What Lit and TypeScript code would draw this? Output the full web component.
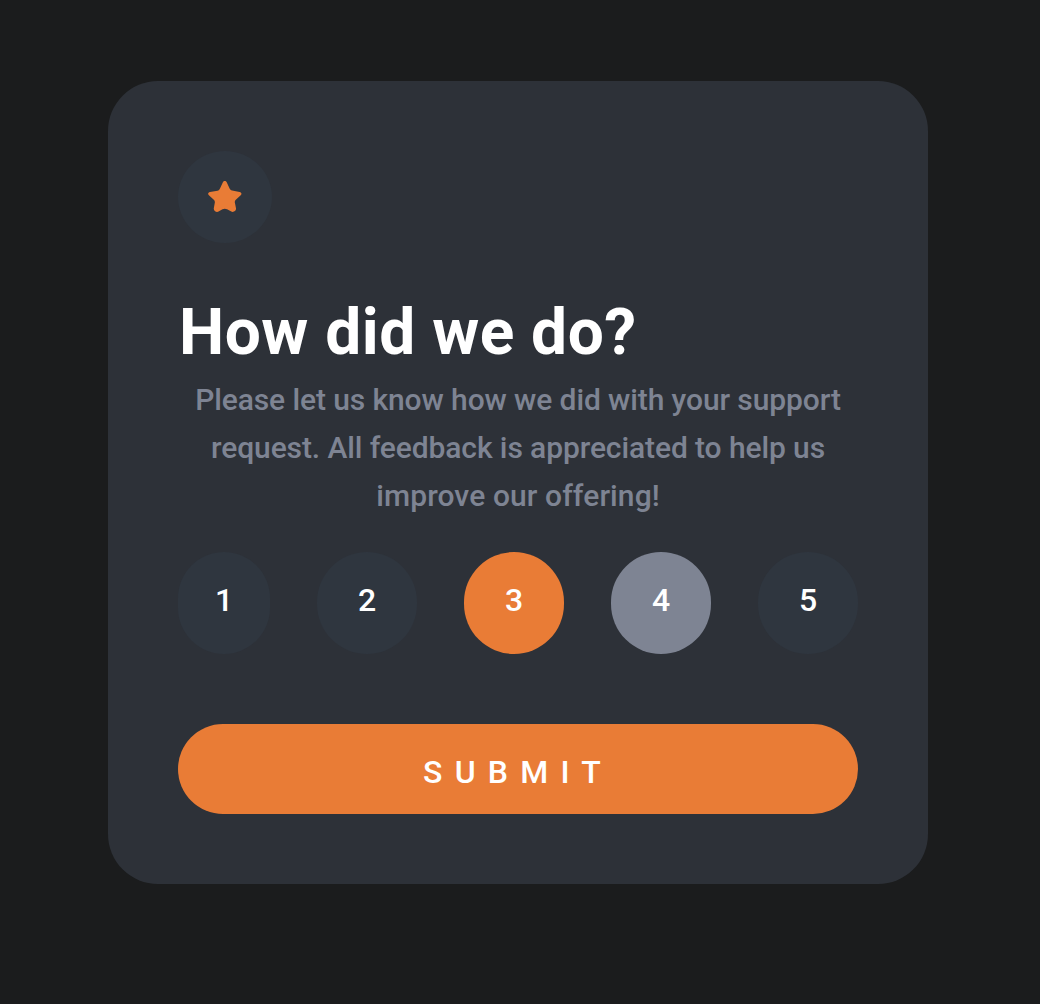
import { LitElement, html, css } from "lit";
import { customElement, state } from "lit/decorators.js";
import { classMap } from "lit/directives/class-map.js";

@customElement("app-root")
export class AppRoot extends LitElement {
  static styles = css`
    :host {
      display: block;
      box-sizing: border-box;
      height: 1004px;
      padding: 81px 112px 120px 108px;
      background: #1b1c1d;
      font-family: Roboto, "Liberation Sans", sans-serif;
    }
    .card {
      box-sizing: border-box;
      width: 820px;
      height: 803px;
      padding: 70px;
      border-radius: 50px;
      background: #2d3138;
      display: flex;
      flex-direction: column;
      align-items: flex-start;
    }
    .badge {
      box-sizing: border-box;
      width: 94px;
      height: 92px;
      padding: 30px;
      border-radius: 50%;
      background: #2f363f;
    }
    .star {
      display: block;
      width: 34px;
      height: 32px;
    }
    .title {
      margin: 50px 0 0;
      padding: 2px 0 0 1px;
      font-size: 64px;
      line-height: 76px;
      font-weight: 700;
      letter-spacing: 0.5px;
      color: #fff;
      white-space: nowrap;
    }
    .text {
      margin: 5px 0 0;
      width: 680px;
      height: 144px;
      font-size: 30px;
      line-height: 48px;
      font-weight: 500;
      letter-spacing: -0.1px;
      text-align: center;
      color: #7e8493;
    }
    .line {
      display: block;
      white-space: nowrap;
    }
    .line:last-child {
      letter-spacing: 0.1px;
    }
    .ratings {
      margin-top: 32px;
      width: 680px;
      display: flex;
      justify-content: space-between;
    }
    .rating {
      width: 100px;
      height: 102px;
      padding: 0 0 6px;
      box-sizing: border-box;
      border: 0;
      border-radius: 50px;
      background: #2f363f;
      color: #fff;
      font: 500 32px/1 Roboto, "Liberation Sans", sans-serif;
    }
    .narrow {
      width: 92px;
    }
    .selected {
      background: #e97c36;
    }
    .hovered {
      background: #7e8493;
    }
    .submit {
      margin-top: 70px;
      width: 680px;
      height: 90px;
      padding: 6px 0 0;
      border: 0;
      border-radius: 45px;
      background: #e97c36;
      color: #fff;
      font: 500 32px/1 Roboto, "Liberation Sans", sans-serif;
      letter-spacing: 12.2px;
    }
  `;

  @state() private selected = 3;
  @state() private hovered = 4;

  private lines = [
    "Please let us know how we did with your support",
    "request. All feedback is appreciated to help us",
    "improve our offering!",
  ];

  render() {
    return html`
      <main class="card">
        <div class="badge">
          <svg class="star" viewBox="0 0 34 32">
            <path
              fill="#e97c36"
              d="M14.9 1.2C15.6-.3 18-.3 18.7 1.2L21.6 7.6C22.1 8.7 22.9 9.4 24.1 9.6L31.6 10.9C33.5 11.2 34.1 12.9 32.7 14.2L27.8 18.7C26.9 19.6 26.6 20.5 26.9 21.8L28 27.3C28.5 29.8 25.5 31.6 23.3 30.6L19.1 28.3Q16.8 27.2 14.5 28.3L10.5 30.6C8.3 31.6 5.4 29.8 5.8 27.3L6.8 21.8C7 20.5 6.7 19.6 5.8 18.7L.9 14.2C-.5 12.9.1 11.2 2 10.9L9.5 9.8C10.7 9.6 11.5 8.7 12 7.6Z"
            />
          </svg>
        </div>
        <h1 class="title">How did we do?</h1>
        <p class="text">
          ${this.lines.map((l) => html`<span class="line">${l}</span>`)}
        </p>
        <div class="ratings">
          ${[1, 2, 3, 4, 5].map(
            (n) => html`<button
              class=${classMap({
                rating: true,
                narrow: n === 1,
                selected: n === this.selected,
                hovered: n === this.hovered,
              })}
              @click=${() => (this.selected = n)}
              @mouseenter=${() => (this.hovered = n)}
            >${n}</button>`,
          )}
        </div>
        <button class="submit">SUBMIT</button>
      </main>
    `;
  }
}
